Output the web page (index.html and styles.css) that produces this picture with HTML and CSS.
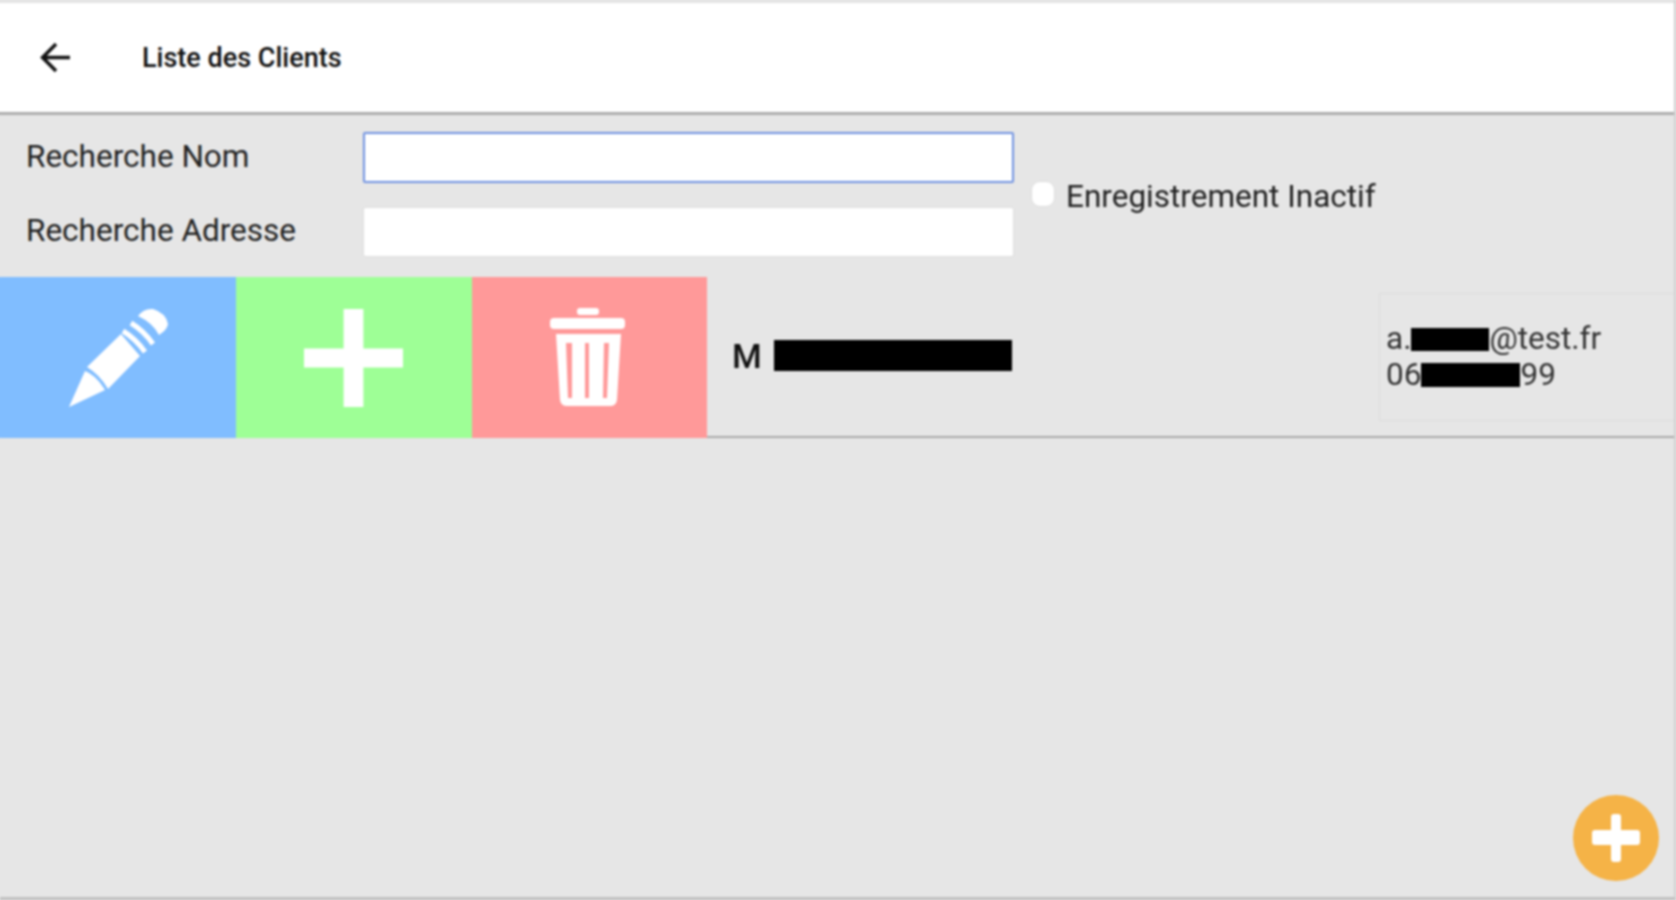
FILE: index.html
```html
<!DOCTYPE html>
<html lang="fr">
<head>
<meta charset="utf-8">
<title>Liste des Clients</title>
<link rel="stylesheet" href="styles.css">
</head>
<body>
<div class="app">
  <header class="topbar">
    <svg class="back" viewBox="0 0 30 30" aria-hidden="true"><path d="M29 15H3M15.500 2 2.500 15l13 13" fill="none" stroke="#111" stroke-width="3.400"/></svg>
    <h1 class="title">Liste des Clients</h1>
  </header>
  <section class="search">
    <div class="fields">
      <label class="field-label" for="nom">Recherche Nom</label>
      <input class="field field-focus" id="nom" type="text">
      <label class="field-label" for="adresse">Recherche Adresse</label>
      <input class="field" id="adresse" type="text">
    </div>
    <label class="inactive"><span class="check"></span><span class="inactive-text">Enregistrement Inactif</span></label>
  </section>
  <section class="row">
    <div class="action action-edit">
      <svg class="pencil" viewBox="0 0 140 130" aria-hidden="true">
        <path d="M19 116 35 80Q46 84 55 99Z" fill="#fff"/>
        <path d="M37 76 71 43 90 65 58 98Q50 84 37 76Z" fill="#fff"/>
        <path d="M73 40Q86 48 95 61M81 32Q94 40 103 53" fill="none" stroke="#fff" stroke-width="5"/>
        <path d="M88 25Q94 17 103 18 116 22 118 33 117 39 109 44 103 32 88 25Z" fill="#fff"/>
      </svg>
    </div>
    <div class="action action-add">
      <svg class="plus" viewBox="0 0 100 100" aria-hidden="true"><path d="M40 1H60V41H100V60H60V100H40V60H0V41H40Z" fill="#fff"/></svg>
    </div>
    <div class="action action-delete">
      <svg class="trash" viewBox="0 0 120 130" aria-hidden="true">
        <rect x="48" y="18" width="22" height="7" rx="3" fill="#fff"/>
        <rect x="21" y="28" width="75" height="11" rx="4" fill="#fff"/>
        <path fill-rule="evenodd" d="M27 44H92L88 110Q87 116 81 116H38Q32 116 31 110ZM37 53 39 108H43L43 53ZM56 53 56 108H60V53ZM75 53 74 108H78L80 53Z" fill="#fff"/>
      </svg>
    </div>
    <div class="name">M <span class="redact redact-name"></span></div>
    <div class="contact">
      <div class="contact-line">a.<span class="redact redact-mail"></span>@test.fr</div>
      <div class="contact-line">06<span class="redact redact-phone"></span>99</div>
    </div>
  </section>
  <button class="fab" aria-label="Ajouter">
    <svg class="fab-plus" viewBox="0 0 48 48" aria-hidden="true"><path d="M19 3Q19 0 22 0H26Q29 0 29 3V16H45Q48 16 48 19V28Q48 31 45 31H29V45Q29 48 26 48H22Q19 48 19 45V31H3Q0 31 0 28V19Q0 16 3 16H19Z" fill="#fff"/></svg>
  </button>
</div>
</body>
</html>
```
FILE: styles.css
```css
html, body {
  margin: 0;
  height: 100%;
  overflow: hidden;
  background: #e6e6e6;
}

.app {
  position: relative;
  box-sizing: border-box;
  height: 900px;
  display: flex;
  flex-direction: column;
  background: #e6e6e6;
  border-bottom: 3px solid #c0c0c0;
  border-right: 2px solid #d0d0d0;
  font-family: Roboto, sans-serif;
  color: #222;
  filter: blur(0.8px);
}

.topbar {
  box-sizing: border-box;
  height: 115px;
  flex: none;
  display: flex;
  align-items: center;
  margin-left: -6px;
  padding: 0 0 0 46px;
  background: #fff;
  border-top: 3px solid #e4e4e4;
  border-bottom: 3px solid #adadad;
}

.back {
  width: 31px;
  height: 31px;
}

.title {
  margin: 0 0 0 71px;
  font-size: 27px;
  font-weight: 500;
  color: #111;
}

.search {
  box-sizing: border-box;
  height: 162px;
  flex: none;
  display: flex;
  align-items: flex-start;
  padding: 17px 0 0 26px;
}

.fields {
  display: grid;
  grid-template-columns: 337px 651px;
  grid-template-rows: 51px 50px;
  row-gap: 24px;
  align-items: center;
}

.field-label {
  font-size: 31.500px;
  line-height: 34px;
  margin-top: -2px;
}

.field {
  box-sizing: border-box;
  width: 100%;
  height: 100%;
  margin: 0;
  padding: 0 8px;
  background: #fff;
  border: 1px solid #dedede;
  border-radius: 2px;
  outline: none;
}

.field-focus {
  border: 2px solid #7092e0;
}

.inactive {
  display: flex;
  align-items: center;
  height: 124px;
  margin-left: 17px;
  font-size: 31.500px;
}

.inactive-text {
  margin-top: 5px;
}

.check {
  box-sizing: border-box;
  width: 24px;
  height: 26px;
  margin-right: 11px;
  background: #fff;
  border: 1px solid #dcdcdc;
  border-radius: 9px;
}

.row {
  height: 161px;
  flex: none;
  display: flex;
  margin-left: -6px;
  box-shadow: inset 0 -2px 0 #a9a9a9;
}

.action {
  width: 236px;
  flex: none;
  display: flex;
  align-items: center;
  justify-content: center;
}

.action-edit {
  box-sizing: border-box;
  width: 242px;
  padding-left: 6px;
  background: #80bdff;
}

.action-add { background: #9eff96; }
.action-delete { width: 235px; background: #ff9999; }

.pencil { width: 140px; height: 130px; margin: 0 0 4px 3px; }
.plus { width: 99px; height: 99px; margin-right: 2px; }
.trash { width: 120px; height: 130px; margin: 0 0 6px -1px; }

.name {
  display: flex;
  align-items: center;
  margin-left: 25px;
  padding-bottom: 4px;
  font-size: 34px;
  font-weight: 500;
  color: #111;
}

.redact {
  display: inline-block;
  background: #000;
}

.redact-name {
  width: 238px;
  height: 31px;
  margin-left: 12px;
}

.contact {
  box-sizing: border-box;
  width: 295px;
  height: 128px;
  margin: 16px 0 0 auto;
  padding-left: 6px;
  display: flex;
  flex-direction: column;
  justify-content: center;
  border: 1px solid #dcdcdc;
  border-right: none;
  font-size: 31.500px;
  line-height: 36px;
  color: #333;
}

.contact-line {
  display: flex;
  align-items: center;
}

.redact-mail { width: 78px; height: 23px; }
.redact-phone { width: 99px; height: 24px; }

.fab {
  position: absolute;
  left: 1573px;
  top: 795px;
  width: 86px;
  height: 86px;
  padding: 0;
  display: flex;
  align-items: center;
  justify-content: center;
  background: #f5b347;
  border: none;
  border-radius: 50%;
}

.fab-plus {
  width: 48px;
  height: 48px;
}
```
